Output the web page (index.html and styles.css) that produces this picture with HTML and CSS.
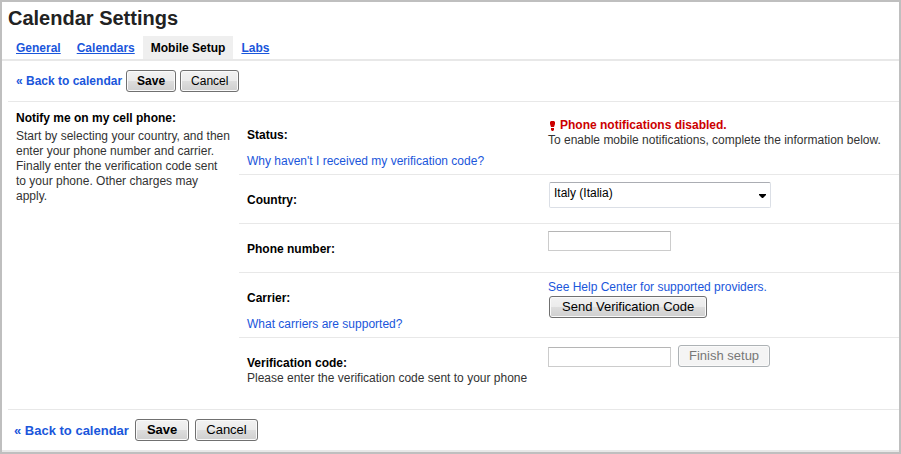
FILE: index.html
```html
<!DOCTYPE html>
<html lang="en">
<head>
<meta charset="utf-8">
<title>Calendar Settings</title>
<link rel="stylesheet" href="styles.css">
</head>
<body>
<h1 class="title">Calendar Settings</h1>
<nav class="tabs">
  <a class="tab" href="#general">General</a>
  <a class="tab" href="#calendars">Calendars</a>
  <a class="tab tab-active" href="#mobile" aria-current="page">Mobile Setup</a>
  <a class="tab" href="#labs">Labs</a>
</nav>
<div class="toolbar">
  <a class="back" href="#calendar">« Back to calendar</a>
  <button class="button button-primary" type="button">Save</button>
  <button class="button" type="button">Cancel</button>
</div>
<main class="settings">
  <section class="intro">
    <h2 class="heading">Notify me on my cell phone:</h2>
    <p class="intro-text">Start by selecting your country, and then enter your phone number and carrier. Finally enter the verification code sent<br>to your phone. Other charges may<br>apply.</p>
  </section>
  <form class="fields">
    <div class="row row-status">
      <div class="caption">
        <h2 class="heading">Status:</h2>
        <a class="help" href="#why">Why haven't I received my verification code?</a>
      </div>
      <div class="control">
        <p class="alert"><svg class="alert-icon" viewBox="0 0 5 10" aria-hidden="true"><path d="M1 0h3l1 1v2L4 6H1L0 3V1zM1 7h3v2L3 10H2L1 9z" fill="#c00"/></svg>Phone notifications disabled.</p>
        <p>To enable mobile notifications, complete the information below.</p>
      </div>
    </div>
    <div class="row">
      <div class="caption"><label class="heading" for="country">Country:</label></div>
      <div class="control">
        <div class="select-box">
          <select class="select" id="country"><option>Italy (Italia)</option></select>
          <svg class="arrow" viewBox="0 0 7 4" aria-hidden="true"><path d="M0 0h7v1L4 4H3L0 1z"/></svg>
        </div>
      </div>
    </div>
    <div class="row">
      <div class="caption"><label class="heading" for="phone">Phone number:</label></div>
      <div class="control"><input class="input" id="phone" type="tel"></div>
    </div>
    <div class="row">
      <div class="caption">
        <h2 class="heading">Carrier:</h2>
        <a class="help" href="#carriers">What carriers are supported?</a>
      </div>
      <div class="control">
        <a class="providers" href="#providers">See Help Center for supported providers.</a>
        <button class="button button-send" type="button">Send Verification Code</button>
      </div>
    </div>
    <div class="row row-code">
      <div class="caption">
        <label class="heading" for="code">Verification code:</label>
        <p>Please enter the verification code sent to your phone</p>
      </div>
      <div class="control control-inline">
        <input class="input" id="code" type="text">
        <button class="button" type="button" disabled>Finish setup</button>
      </div>
    </div>
  </form>
</main>
<div class="toolbar toolbar-bottom">
  <a class="back" href="#calendar">« Back to calendar</a>
  <button class="button button-primary" type="button">Save</button>
  <button class="button" type="button">Cancel</button>
</div>
</body>
</html>
```
FILE: styles.css
```css
* {
  box-sizing: border-box;
}

body {
  margin: 0;
  min-height: 100vh;
  border: 2px solid #bfbfbf;
  background: #fff;
  color: #333;
  font: 12px/15px "Liberation Sans", Arial, sans-serif;
  display: flex;
  flex-direction: column;
}

h1, h2, p {
  margin: 0;
}

a {
  color: #1a56db;
  text-decoration: none;
}

.title {
  padding: 4px 6px 6px;
  color: #222;
  font-size: 20px;
  line-height: 24px;
}

.tabs {
  display: flex;
  padding-left: 6px;
  border-bottom: 2px solid #e8e8e8;
}

.tab {
  padding: 5px 8px 3px;
  font-weight: bold;
  text-decoration: underline;
}

.tab-active {
  background: #efefef;
  color: #000;
  text-decoration: none;
}

.toolbar {
  display: flex;
  align-items: center;
  gap: 4px;
  margin-left: 6px;
  padding: 9px 8px;
  border-bottom: 1px solid #e8e8e8;
}

.back {
  font-weight: bold;
}

.button {
  height: 22px;
  padding: 0 10px;
  border: 1px solid #707070;
  border-radius: 3px;
  background: linear-gradient(#f2f2f2, #ebebeb 50%, #ddd 50%, #cfcfcf);
  box-shadow: inset 0 0 0 1px #fafafa;
  color: #000;
  font: 13px/18px "Liberation Sans", Arial, sans-serif;
}

.toolbar .button {
  font-size: 12px;
}

.button-primary {
  font-weight: bold;
}

.button:disabled {
  border-color: #adb2b5;
  background: #f4f4f4;
  color: #777;
}

.settings {
  display: grid;
  grid-template-columns: 231px 1fr;
  margin-left: 6px;
  border-bottom: 1px solid #e8e8e8;
}

.intro {
  padding: 9px 0 0 8px;
}

.intro-text {
  margin-top: 3px;
}

.heading {
  display: block;
  color: #000;
  font-size: 12px;
  font-weight: bold;
}

.row {
  display: grid;
  grid-template-columns: 301px 1fr;
  min-height: 49px;
  border-bottom: 1px solid #e8e8e8;
}

.row-code {
  min-height: 71px;
  border-bottom: 0;
}

.caption {
  padding: 18px 0 5px 8px;
}

.control {
  padding: 7px 0 0 8px;
}

.row-status .caption {
  padding-top: 26px;
}

.row-status .control {
  padding-top: 16px;
}

.help {
  display: block;
  margin-top: 11px;
}

.alert {
  display: flex;
  align-items: center;
  gap: 5px;
  padding-left: 2px;
  color: #c00;
  font-weight: bold;
}

.alert-icon {
  width: 5px;
  height: 10px;
}

.select-box {
  position: relative;
  width: 222px;
  margin-left: 1px;
}

.select {
  display: block;
  appearance: none;
  width: 100%;
  height: 26px;
  padding: 0 20px 4px 4px;
  border: 1px solid #dbdfe6;
  border-top-color: #abadb3;
  border-radius: 2px;
  background: #fff;
  color: #000;
  font: inherit;
}

.arrow {
  position: absolute;
  right: 5px;
  bottom: 10px;
  width: 7px;
  height: 4px;
  pointer-events: none;
}

.input {
  display: block;
  width: 123px;
  height: 20px;
  padding: 1px 3px;
  border: 1px solid #ccc;
  border-top-color: #b5b5b5;
  background: #fff;
  font: inherit;
}

.providers {
  display: block;
}

.button-send {
  display: block;
  margin: 1px 0 0 1px;
  padding: 0 12px;
}

.control-inline {
  display: flex;
  align-items: flex-end;
  align-self: start;
  gap: 7px;
}

.toolbar-bottom {
  flex: 1;
  gap: 6px;
  margin-left: 0;
  padding: 9px 12px;
  border-bottom: 2px solid #e8e8e8;
}

.toolbar-bottom .back,
.toolbar-bottom .button {
  font-size: 13px;
}

.toolbar-bottom .button-primary {
  padding: 0 11px;
}
```
